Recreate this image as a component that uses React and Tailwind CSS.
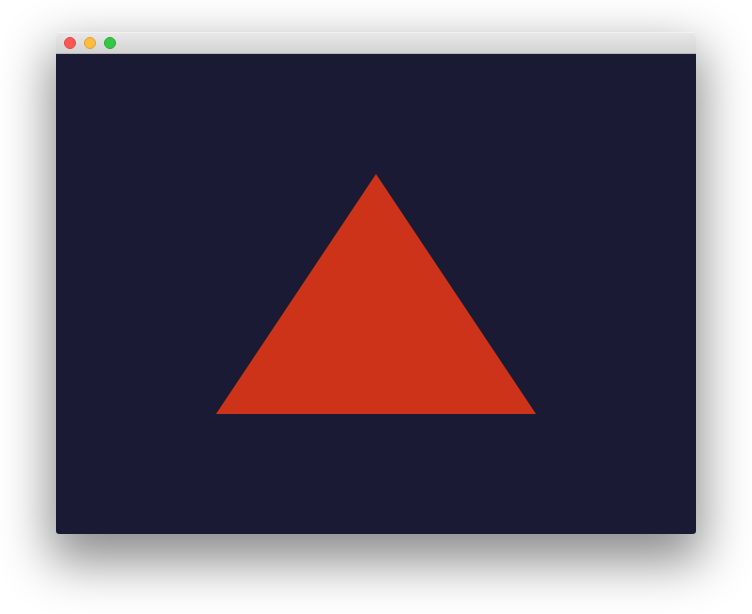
export default function App() {
  return (
    <div className="w-[752px] h-[614px] bg-white flex justify-center pt-8">
      {/* Window */}
      <div className="w-[640px] h-[502px] flex flex-col rounded-t-[5px] rounded-b-[3px] overflow-hidden shadow-[0_22px_50px_6px_rgba(0,0,0,0.45)]">
        {/* Title bar */}
        <div className="h-[22px] flex items-center gap-2 px-2 bg-gradient-to-b from-[#e8e8e8] to-[#d3d3d3] border-t border-t-[#f2f2f2] border-b border-b-[#b9b9b9]">
          <span className="w-3 h-3 rounded-full bg-[#fc5753] border border-[#df4744]" />
          <span className="w-3 h-3 rounded-full bg-[#fdbc40] border border-[#de9f34]" />
          <span className="w-3 h-3 rounded-full bg-[#33c748] border border-[#27aa35]" />
        </div>
        {/* Canvas */}
        <div className="flex-1 bg-[#1a1a34] flex items-center justify-center">
          <svg width="640" height="480" viewBox="0 0 640 480">
            <polygon points="320,120 480,360 160,360" fill="#cc3319" />
          </svg>
        </div>
      </div>
    </div>
  )
}
